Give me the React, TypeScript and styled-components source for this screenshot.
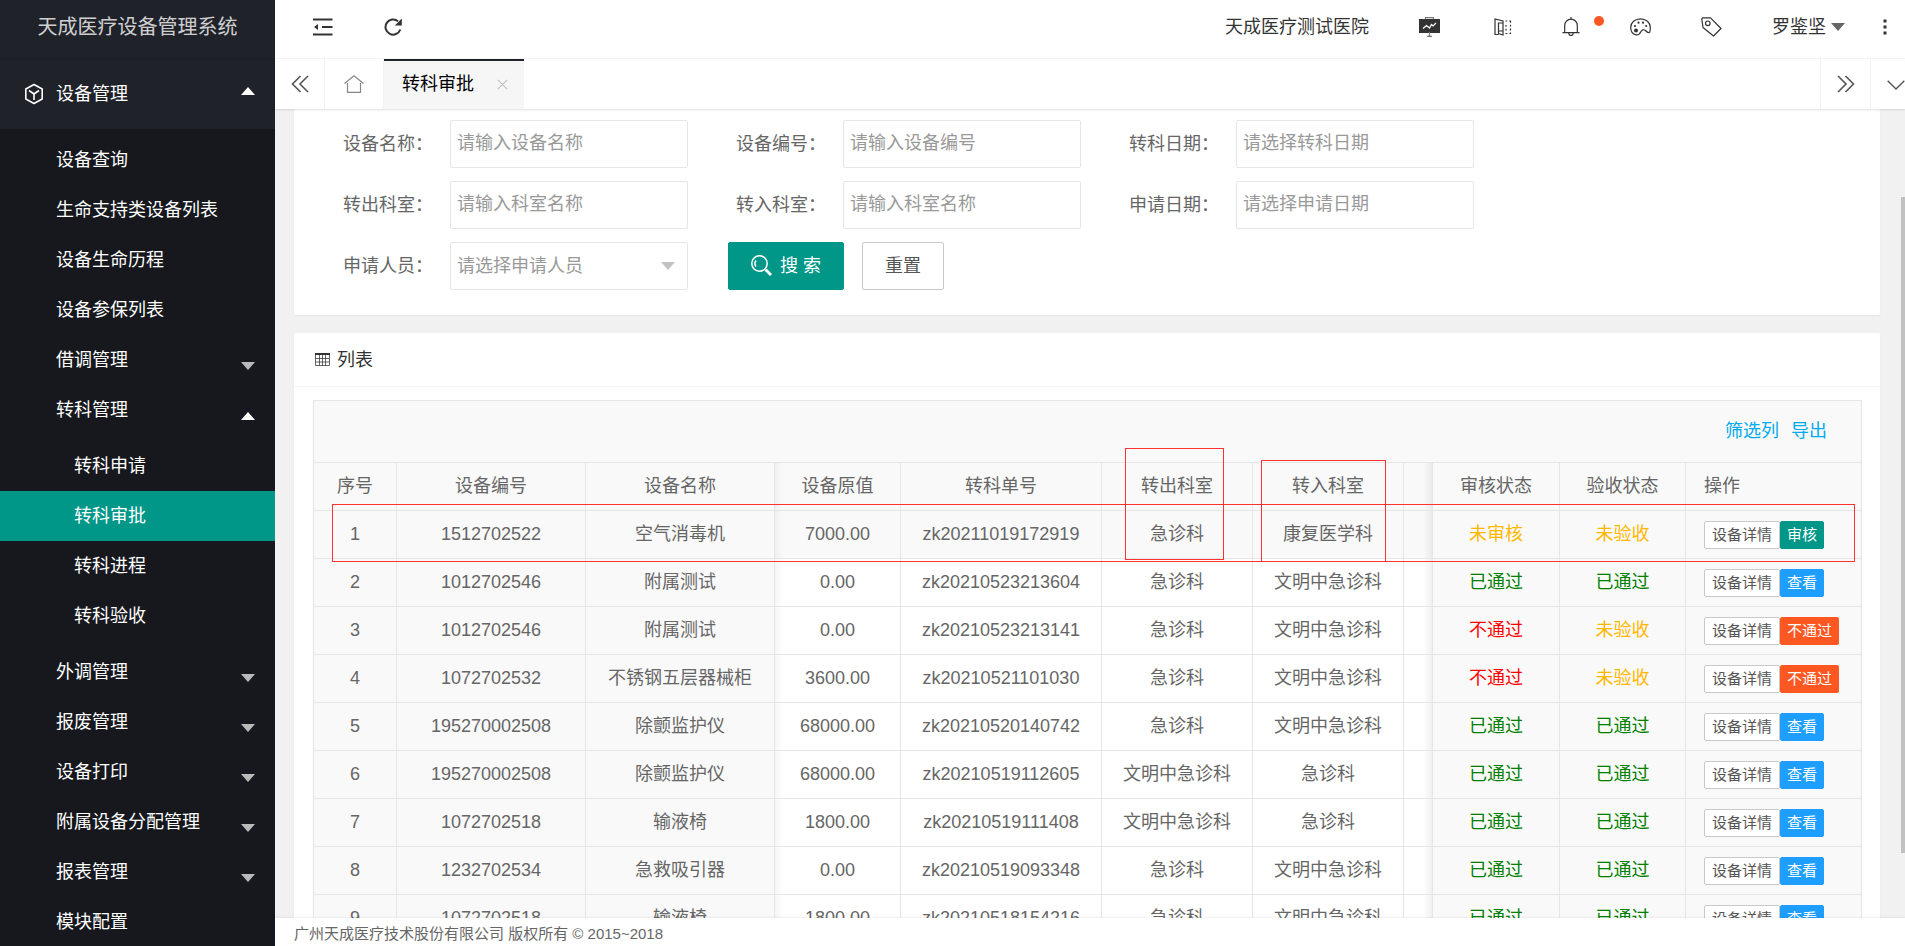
import React from 'react';
import styled, { createGlobalStyle, css } from 'styled-components';

const Global = createGlobalStyle`
  * { box-sizing: border-box; }
  html, body, #root { height: 100%; }
  body {
    margin: 0;
    overflow: hidden;
    background: #f1f1f1;
    color: #333;
    font-family: "Liberation Sans", "Noto Sans CJK SC", sans-serif;
    font-size: 18px;
    line-height: 24px;
  }
  button, input, select { font: inherit; color: inherit; }
  button { cursor: pointer; }
  a { color: inherit; text-decoration: none; }
  ul { list-style: none; margin: 0; padding: 0; }
`;

const Shell = styled.div`
  display: flex;
  height: 100vh;
`;

/* ---------- side menu ---------- */

const Side = styled.aside`
  flex: 0 0 275px;
  overflow: hidden;
  background: #20222a;
  color: #fff;
`;

const Brand = styled.h1`
  display: flex;
  align-items: center;
  justify-content: center;
  height: 58px;
  margin: 0;
  padding: 0 37px 4px;
  font-size: 20px;
  font-weight: 400;
  white-space: nowrap;
  color: rgba(255, 255, 255, 0.8);
  box-shadow: 0 1px 2px rgba(0, 0, 0, 0.15);
`;

const Group = styled.a`
  display: flex;
  align-items: center;
  height: 71px;
  padding: 0 20px 0 24px;
  gap: 12px;
`;

const SubMenu = styled.ul`
  padding: 6px 0;
  background: #16181d;
`;

const Leaves = styled.ul`
  padding: 6px 0;
`;

const MenuLink = styled.a<{ $deep?: boolean; $active?: boolean }>`
  display: flex;
  align-items: center;
  height: 50px;
  padding: 0 20px 0 ${p => (p.$deep ? 74 : 56)}px;
  white-space: nowrap;
  background: ${p => (p.$active ? '#009688' : 'transparent')};
`;

const Caret = styled.span<{ $up?: boolean; $low?: boolean; $color: string }>`
  width: 0;
  height: 0;
  margin-left: auto;
  margin-top: ${p => (p.$low ? 12 : 0)}px;
  border: solid transparent;
  border-width: ${p => (p.$up ? '0 7px 8px' : '8px 7px 0')};
  ${p => (p.$up ? css`border-bottom-color: ${p.$color};` : css`border-top-color: ${p.$color};`)}
`;

const GroupCaret = styled(Caret)`
  margin-bottom: 6px;
`;

/* ---------- header ---------- */

const Main = styled.div`
  flex: 1;
  min-width: 0;
  display: flex;
  flex-direction: column;
`;

const TopBar = styled.header`
  display: flex;
  align-items: center;
  justify-content: space-between;
  flex: 0 0 59px;
  padding: 0 18px 4px 38px;
  background: #fff;
  border-bottom: 1px solid #f6f6f6;
`;

const Tools = styled.div<{ $gap: number }>`
  display: flex;
  align-items: center;
  gap: ${p => p.$gap}px;
`;

const IconButton = styled.button<{ $color?: string }>`
  position: relative;
  display: flex;
  padding: 0;
  border: 0;
  background: none;
  color: ${p => p.$color || '#333'};
`;

const BoardButton = styled(IconButton)`
  margin-right: 4px;
`;

const Dot = styled.span`
  position: absolute;
  top: -1px;
  right: -24px;
  width: 10px;
  height: 10px;
  border-radius: 50%;
  background: #ff5722;
`;

const UserButton = styled(IconButton)`
  align-items: center;
  gap: 5px;
`;

const Tabs = styled.nav`
  position: relative;
  z-index: 2;
  display: flex;
  flex: none;
  background: #fff;
  box-shadow: 0 1px 2px rgba(0, 0, 0, 0.12);
`;

const TabCell = styled.button<{ $width: number; $side: 'left' | 'right'; $color?: string }>`
  display: flex;
  align-items: center;
  justify-content: center;
  flex: 0 0 ${p => p.$width}px;
  height: 50px;
  padding: 0;
  border: 0 solid #f3f3f3;
  border-${p => (p.$side === 'left' ? 'right' : 'left')}-width: 1px;
  background: none;
  color: ${p => p.$color || '#555'};
`;

const EdgeCell = styled(TabCell)`
  justify-content: flex-start;
  padding-left: 16px;
  overflow: hidden;
`;

const Tab = styled.div`
  display: flex;
  align-items: center;
  gap: 23px;
  height: 50px;
  padding: 0 16px 2px 18px;
  border-top: 2px solid #20222a;
  background: #f6f6f6;
  color: #000;
`;

const Spacer = styled.div`
  flex: 1;
`;

/* ---------- page body ---------- */

const Body = styled.main`
  position: relative;
  flex: 1;
  min-height: 0;
  overflow: hidden;
  padding: 0 25px 0 19px;
`;

const ScrollThumb = styled.div`
  position: absolute;
  top: 88px;
  right: 0;
  width: 4px;
  height: 656px;
  background: #c1c1c1;
`;

const Card = styled.section`
  margin-bottom: 18px;
  border-radius: 2px;
  background: #fff;
  box-shadow: 0 1px 2px rgba(0, 0, 0, 0.05);
`;

const Form = styled.form`
  display: grid;
  grid-template-columns: repeat(3, 375px);
  gap: 13px 18px;
  padding: 11px 19px 25px;
`;

const Field = styled.div`
  display: flex;
  align-items: center;
`;

const Label = styled.label`
  flex: 0 0 137px;
  padding: 0 17px 1px 0;
  text-align: right;
  white-space: nowrap;
  color: #666;
`;

const controlStyle = css`
  flex: 1;
  min-width: 0;
  height: 48px;
  padding: 0 6px 1px;
  border: 1px solid #e6e6e6;
  border-radius: 2px;
  outline: 0;
  background: #fff;
`;

const Input = styled.input`
  ${controlStyle}
  &::placeholder { color: #999; opacity: 1; }
`;

const SelectBox = styled.div`
  position: relative;
  display: flex;
  flex: 1;
`;

const Select = styled.select`
  ${controlStyle}
  appearance: none;
  color: #999;
`;

const SelectCaret = styled(Caret)`
  position: absolute;
  top: 20px;
  right: 13px;
  pointer-events: none;
`;

const FormButtons = styled.div`
  display: flex;
  gap: 18px;
  padding-left: 22px;
`;

const FormButton = styled.button<{ $primary?: boolean }>`
  display: flex;
  align-items: center;
  justify-content: center;
  gap: 8px;
  width: ${p => (p.$primary ? 116 : 82)}px;
  height: 48px;
  padding: 0 0 1px;
  border: 1px solid ${p => (p.$primary ? '#009688' : '#c9c9c9')};
  border-radius: 2px;
  background: ${p => (p.$primary ? '#009688' : '#fff')};
  color: ${p => (p.$primary ? '#fff' : '#555')};
  white-space: nowrap;
`;

const CardHead = styled.h2`
  display: flex;
  align-items: center;
  gap: 7px;
  height: 54px;
  margin: 0;
  padding: 0 21px;
  border-bottom: 1px solid #f6f6f6;
  font-size: 18px;
  font-weight: 400;
`;

const CardBody = styled.div`
  padding: 13px 18px 19px 19px;
`;

const Grid = styled.div`
  position: relative;
  border: 1px solid #e6e6e6;
`;

const Toolbar = styled.div`
  display: flex;
  align-items: center;
  justify-content: flex-end;
  gap: 12px;
  height: 62px;
  padding: 0 34px 2px;
  border-bottom: 1px solid #e6e6e6;
  background: #f9f9f9;
  color: #01aaed;
`;

const Table = styled.table`
  width: 100%;
  border-collapse: separate;
  border-spacing: 0;
  table-layout: fixed;
  color: #666;
`;

const cell = css<{ $fixed?: boolean; $left?: boolean; $edge?: 'right' | 'gap' }>`
  height: 48px;
  padding: 0 0 2px ${p => (p.$left ? 18 : 0)}px;
  border: 0 solid #e6e6e6;
  border-width: 0 1px 1px 0;
  font-weight: 400;
  text-align: ${p => (p.$left ? 'left' : 'center')};
  white-space: nowrap;
  ${p => p.$fixed && css`background-color: #f9f9f9;`}
  ${p => p.$edge === 'right' && css`background-image: linear-gradient(to right, rgba(0, 0, 0, 0.04), transparent 8px);`}
  ${p => p.$edge === 'gap' && css`background-image: linear-gradient(to left, rgba(0, 0, 0, 0.06), transparent 9px);`}
  &:last-child { border-right: 0; }
`;

const Th = styled.th`
  ${cell}
  background-color: #f9f9f9;
`;

const Td = styled.td`
  ${cell}
`;

const ActionTd = styled(Td)`
  padding-bottom: 0;
`;

const Tr = styled.tr<{ $hover?: boolean }>`
  background: ${p => (p.$hover ? '#f9f9f9' : '#fff')};
`;

const Status = styled.span<{ $tone: string }>`
  color: ${p => p.$tone};
`;

const Actions = styled.div`
  display: flex;
`;

const SmallButton = styled.button<{ $bg?: string }>`
  height: 28px;
  padding: 0 ${p => (p.$bg ? 6 : 7)}px;
  border: 1px solid ${p => p.$bg || '#c9c9c9'};
  border-radius: 2px;
  background: ${p => p.$bg || '#fff'};
  color: ${p => (p.$bg ? '#fff' : '#555')};
  font-size: 15px;
  line-height: 26px;
  white-space: nowrap;
`;

const Mark = styled.div`
  position: absolute;
  border: 1px solid #f33;
  pointer-events: none;
`;
const RowMark = styled(Mark)`
  top: 103px;
  left: 18px;
  right: 6px;
  height: 58px;
`;
const OutMark = styled(Mark)`
  top: 47px;
  left: 811px;
  width: 99px;
  height: 112px;
`;
const InMark = styled(Mark)`
  top: 59px;
  left: 947px;
  width: 125px;
  height: 102px;
`;

const Footer = styled.footer`
  position: relative;
  flex: 0 0 28px;
  padding: 4px 19px 0;
  background: #fff;
  box-shadow: 0 -1px 2px rgba(0, 0, 0, 0.06);
  color: #666;
  font-size: 15px;
`;

/* ---------- icons ---------- */

type IconProps = { w: number; h: number; sw?: number; children: React.ReactNode };
const Icon = ({ w, h, sw = 1.2, children }: IconProps) => (
  <svg width={w} height={h} viewBox={`0 0 ${w} ${h}`} fill="none" stroke="currentColor" strokeWidth={sw} aria-hidden="true">
    {children}
  </svg>
);

const CubeIcon = () => (
  <Icon w={20} h={22} sw={1.6}>
    <path d="M10 1.5 18.2 6v10L10 20.5 1.8 16V6z" strokeLinejoin="round" />
    <path d="M5 7.5 10 11l5-3.5M10 11v6" />
  </Icon>
);
const FoldIcon = () => (
  <Icon w={20} h={18} sw={2}>
    <path d="M0 1.5h19.500M9 9h10.500M0 16.5h19.500" />
    <path d="M1 9l4-3v6z" fill="currentColor" stroke="none" />
  </Icon>
);
const RefreshIcon = () => (
  <Icon w={18} h={18} sw={2}>
    <path d="M16.300 11.500A7.600 7.600 0 1 1 14 3.200" />
    <path d="M17.800.6v7H10.800z" fill="currentColor" stroke="none" />
  </Icon>
);
const BoardIcon = () => (
  <Icon w={21} h={20}>
    <path d="M6.5 2V.7h8V2" stroke="#777" />
    <path d="M0 2h21v14H0z" fill="currentColor" stroke="none" />
    <path d="M10.500 15v4.300M8 19.300h5" stroke="#777" />
    <path d="M4 11.500 7.500 8.500l3 2.500 2-3.500 1.500 1.500 3-3" stroke="#fff" />
  </Icon>
);
const NoteIcon = () => (
  <Icon w={18} h={18}>
    <path d="M4.500 16.500H1V1l8 2v14l-4.500-1.500V5H9M4.500 13H9" />
    <path d="M11.500 3h6M11.500 15.500h6M12 7v6M16.500 3v13" strokeDasharray="1.800 2" />
  </Icon>
);
const BellIcon = () => (
  <Icon w={18} h={20}>
    <path d="M.5 15.600h17M2.700 15.500V8.500a6.300 6.300 0 0 1 12.600 0v7M9 2V0M6.800 16a2.200 2.500 0 0 0 4.400 0" />
  </Icon>
);
const PaletteIcon = () => (
  <Icon w={21} h={18}>
    <path d="M6 16.800C2.500 16 .7 13 .7 9.500.7 4.500 5 .8 10.500.8s9.800 3.700 9.800 8.700c0 2 0 3-.6 4.800-1.500.7-3-.3-4.300-1.800-1.800-1.500-3.500-.5-4.400 1-1 2-2.500 3.800-5 3.300z" />
    <g fill="currentColor" stroke="none">
      <circle cx="5" cy="8" r="1.100" /><circle cx="8.500" cy="4.700" r="1.100" /><circle cx="13" cy="4.700" r="1.100" /><circle cx="16.200" cy="8" r="1.100" /><circle cx="6" cy="12.500" r="2" />
    </g>
  </Icon>
);
const TagIcon = () => (
  <Icon w={21} h={20}>
    <path d="M1.500.8h8L20 11.500 12.500 19 2 10.500.8 2z" strokeLinejoin="round" />
    <circle cx="6.800" cy="6.300" r="2.300" />
  </Icon>
);
const MoreIcon = () => (
  <Icon w={4} h={16}>
    <g fill="currentColor" stroke="none"><path d="M.5.5h3v3h-3zM.5 6.500h3v3h-3zM.5 12.500h3v3h-3z" /></g>
  </Icon>
);
const DoubleLeft = () => (
  <Icon w={18} h={18} sw={1.600}><path d="M9.500 1 1.500 9l8 8M17 1 9 9l8 8" /></Icon>
);
const DoubleRight = () => (
  <Icon w={18} h={18} sw={1.600}><path d="M1 1l8 8-8 8M8.500 1l8 8-8 8" /></Icon>
);
const DownIcon = () => (
  <Icon w={18} h={10} sw={1.400}><path d="M.7.7 9 9 17.300.7" /></Icon>
);
const HomeIcon = () => (
  <Icon w={20} h={18} sw={1.200}><path d="M.5 8.500 10 .8l9.500 7.700M3.500 8v9.300h13V8" /></Icon>
);
const CloseIcon = () => (
  <Icon w={11} h={11} sw={1.200}><path d="M.8.8l9.400 9.400M10.200.8.8 10.200" /></Icon>
);
const SearchIcon = () => (
  <Icon w={21} h={21} sw={1.500}>
    <circle cx="8.500" cy="8.500" r="7.700" /><path d="M5 11.500A5 5 0 0 1 5 5.500" /><path d="M14.500 14.500 20 20" strokeWidth="3" />
  </Icon>
);
const TableIcon = () => (
  <Icon w={15} h={13} sw={1}>
    <path d="M.5.5h14v12H.5zM.5 5.500h14M.5 9h14M4.500 2v10.500M7.500 2v10.500M10.500 2v10.500" strokeOpacity=".75" />
    <path d="M0 1h15" strokeWidth="2" />
  </Icon>
);

/* ---------- data ---------- */

type Entry = { text: string; arrow?: boolean; children?: string[] };
const menu: Entry[] = [
  { text: '设备查询' },
  { text: '生命支持类设备列表' },
  { text: '设备生命历程' },
  { text: '设备参保列表' },
  { text: '借调管理', arrow: true },
  { text: '转科管理', arrow: true, children: ['转科申请', '转科审批', '转科进程', '转科验收'] },
  { text: '外调管理', arrow: true },
  { text: '报废管理', arrow: true },
  { text: '设备打印', arrow: true },
  { text: '附属设备分配管理', arrow: true },
  { text: '报表管理', arrow: true },
  { text: '模块配置' },
];

const rows = [
  ['1512702522', '空气消毒机', '7000.00', 'zk20211019172919', '急诊科', '康复医学科', '未审核', '未验收', '审核'],
  ['1012702546', '附属测试', '0.00', 'zk20210523213604', '急诊科', '文明中急诊科', '已通过', '已通过', '查看'],
  ['1012702546', '附属测试', '0.00', 'zk20210523213141', '急诊科', '文明中急诊科', '不通过', '未验收', '不通过'],
  ['1072702532', '不锈钢五层器械柜', '3600.00', 'zk20210521101030', '急诊科', '文明中急诊科', '不通过', '未验收', '不通过'],
  ['195270002508', '除颤监护仪', '68000.00', 'zk20210520140742', '急诊科', '文明中急诊科', '已通过', '已通过', '查看'],
  ['195270002508', '除颤监护仪', '68000.00', 'zk20210519112605', '文明中急诊科', '急诊科', '已通过', '已通过', '查看'],
  ['1072702518', '输液椅', '1800.00', 'zk20210519111408', '文明中急诊科', '急诊科', '已通过', '已通过', '查看'],
  ['1232702534', '急救吸引器', '0.00', 'zk20210519093348', '急诊科', '文明中急诊科', '已通过', '已通过', '查看'],
  ['1072702518', '输液椅', '1800.00', 'zk20210518154216', '急诊科', '文明中急诊科', '已通过', '已通过', '查看'],
];

const tones: Record<string, string> = {
  未审核: '#ffb800',
  未验收: '#ffb800',
  已通过: '#008000',
  不通过: '#ff0000',
};
const actionColors: Record<string, string> = { 审核: '#009688', 查看: '#1e9fff', 不通过: '#ff5722' };

const Col = styled.col<{ $w?: number }>`
  width: ${p => (p.$w ? `${p.$w}px` : 'auto')};
`;
const colWidths = [83, 189, 189, 126, 201, 151, 151, undefined, 127, 126, 175];

const fields = [
  { id: 'name', label: '设备名称：', hint: '请输入设备名称' },
  { id: 'code', label: '设备编号：', hint: '请输入设备编号' },
  { id: 'moveDate', label: '转科日期：', hint: '请选择转科日期' },
  { id: 'from', label: '转出科室：', hint: '请输入科室名称' },
  { id: 'to', label: '转入科室：', hint: '请输入科室名称' },
  { id: 'applyDate', label: '申请日期：', hint: '请选择申请日期' },
];

/* ---------- views ---------- */

const SideMenu = () => (
  <Side>
    <Brand>天成医疗设备管理系统</Brand>
    <Group href="#">
      <CubeIcon />
      设备管理
      <GroupCaret $up $color="#fff" />
    </Group>
    <SubMenu>
      {menu.map(m => (
        <li key={m.text}>
          <MenuLink href="#">
            {m.text}
            {m.arrow && <Caret $low $up={!!m.children} $color={m.children ? '#fff' : 'rgba(255,255,255,.7)'} />}
          </MenuLink>
          {m.children && (
            <Leaves>
              {m.children.map(c => (
                <li key={c}>
                  <MenuLink href="#" $deep $active={c === '转科审批'}>{c}</MenuLink>
                </li>
              ))}
            </Leaves>
          )}
        </li>
      ))}
    </SubMenu>
  </Side>
);

const Header = () => (
  <TopBar>
    <Tools $gap={51}>
      <IconButton aria-label="收起菜单"><FoldIcon /></IconButton>
      <IconButton aria-label="刷新"><RefreshIcon /></IconButton>
    </Tools>
    <Tools $gap={50}>
      <a href="#">天成医疗测试医院</a>
      <BoardButton aria-label="大屏"><BoardIcon /></BoardButton>
      <IconButton aria-label="说明"><NoteIcon /></IconButton>
      <IconButton aria-label="消息"><BellIcon /><Dot /></IconButton>
      <IconButton aria-label="主题"><PaletteIcon /></IconButton>
      <IconButton aria-label="便签"><TagIcon /></IconButton>
      <Tools $gap={38}>
        <UserButton>罗鉴坚<Caret $color="#666" /></UserButton>
        <IconButton aria-label="更多"><MoreIcon /></IconButton>
      </Tools>
    </Tools>
  </TopBar>
);

const TabBar = () => (
  <Tabs>
    <TabCell $width={50} $side="left" aria-label="向左"><DoubleLeft /></TabCell>
    <TabCell $width={59} $side="left" $color="#888" aria-label="首页"><HomeIcon /></TabCell>
    <Tab>
      转科审批
      <IconButton $color="#c2c2c2" aria-label="关闭"><CloseIcon /></IconButton>
    </Tab>
    <Spacer />
    <TabCell $width={50} $side="right" aria-label="向右"><DoubleRight /></TabCell>
    <EdgeCell $width={35} $side="right" aria-label="标签操作"><span><DownIcon /></span></EdgeCell>
  </Tabs>
);

const SearchForm = () => (
  <Card>
    <Form onSubmit={e => e.preventDefault()}>
      {fields.map(f => (
        <Field key={f.id}>
          <Label htmlFor={f.id}>{f.label}</Label>
          <Input id={f.id} placeholder={f.hint} />
        </Field>
      ))}
      <Field>
        <Label htmlFor="person">申请人员：</Label>
        <SelectBox>
          <Select id="person"><option>请选择申请人员</option></Select>
          <SelectCaret $color="#c2c2c2" />
        </SelectBox>
      </Field>
      <FormButtons>
        <FormButton $primary type="submit"><SearchIcon />搜 索</FormButton>
        <FormButton type="reset">重置</FormButton>
      </FormButtons>
    </Form>
  </Card>
);

const List = () => (
  <Card>
    <CardHead><TableIcon />列表</CardHead>
    <CardBody>
      <Grid>
        <Toolbar><a href="#">筛选列</a><a href="#">导出</a></Toolbar>
        <Table>
          <colgroup>{colWidths.map((w, i) => <Col key={i} $w={w} />)}</colgroup>
          <thead>
            <tr>
              <Th>序号</Th><Th>设备编号</Th><Th>设备名称</Th><Th $edge="right">设备原值</Th><Th>转科单号</Th>
              <Th>转出科室</Th><Th>转入科室</Th><Th $edge="gap" /><Th>审核状态</Th><Th>验收状态</Th><Th $left>操作</Th>
            </tr>
          </thead>
          <tbody>
            {rows.map(([code, name, price, order, from, to, audit, check, action], i) => (
              <Tr key={order} $hover={i === 0}>
                <Td $fixed>{i + 1}</Td>
                <Td $fixed>{code}</Td>
                <Td $fixed>{name}</Td>
                <Td $edge="right">{price}</Td>
                <Td>{order}</Td>
                <Td>{from}</Td>
                <Td>{to}</Td>
                <Td $edge="gap" />
                <Td $fixed><Status $tone={tones[audit]}>{audit}</Status></Td>
                <Td $fixed><Status $tone={tones[check]}>{check}</Status></Td>
                <ActionTd $fixed $left>
                  <Actions>
                    <SmallButton>设备详情</SmallButton>
                    <SmallButton $bg={actionColors[action]}>{action}</SmallButton>
                  </Actions>
                </ActionTd>
              </Tr>
            ))}
          </tbody>
        </Table>
        <RowMark />
        <OutMark />
        <InMark />
      </Grid>
    </CardBody>
  </Card>
);

export default function App() {
  return (
    <>
      <Global />
      <Shell>
        <SideMenu />
        <Main>
          <Header />
          <TabBar />
          <Body>
            <SearchForm />
            <List />
            <ScrollThumb />
          </Body>
          <Footer>广州天成医疗技术股份有限公司 版权所有 © 2015~2018</Footer>
        </Main>
      </Shell>
    </>
  );
}
